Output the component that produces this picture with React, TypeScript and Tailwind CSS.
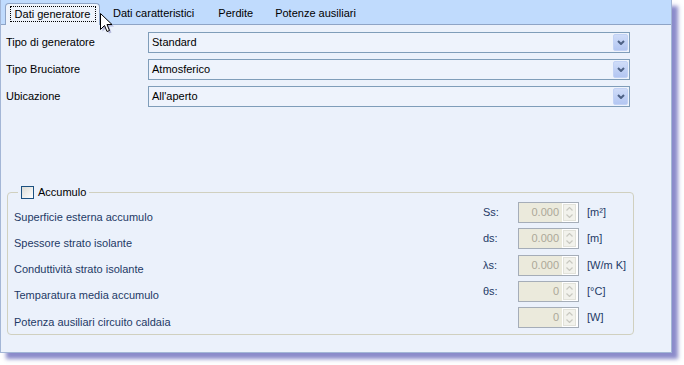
import React from "react";

const font = { fontFamily: '"Liberation Sans", Arial, sans-serif' };

function Combo({ value }: { value: string }) {
  return (
    <div className="h-[21px] w-[482px] border border-[#7f9db9] bg-[#eef3fc] flex items-center justify-between pl-[3px] pr-[1px]">
      <span className="text-black">{value}</span>
      <div className="h-[17px] w-[15px] rounded-[2px] bg-gradient-to-b from-[#cfdcf8] to-[#b3c6f2] border border-[#c2d2f5] flex items-center justify-center">
        <svg width="8" height="5" viewBox="0 0 8 5">
          <path d="M1 1 L4 4 L7 1" fill="none" stroke="#4d6185" strokeWidth="2" />
        </svg>
      </div>
    </div>
  );
}

function Spin({ value }: { value: string }) {
  return (
    <div className="h-[21px] w-[61px] border border-[#a5adb8] bg-[#ebeadc] flex items-center">
      <span className="flex-1 text-right pr-[3px] text-[#aca899]">{value}</span>
      <div className="h-[19px] w-[16px] bg-white pl-[1px] pr-[2px] py-[1px] flex">
        <div className="flex-1 bg-[#f2f2ec] border border-[#e2e2da] flex flex-col items-center justify-center gap-[3px]">
          <svg width="7" height="4" viewBox="0 0 7 4">
            <path d="M0.5 3.5 L3.5 0.5 L6.5 3.5" fill="none" stroke="#c8c8c0" strokeWidth="1.2" />
          </svg>
          <svg width="7" height="4" viewBox="0 0 7 4">
            <path d="M0.5 0.5 L3.5 3.5 L6.5 0.5" fill="none" stroke="#c8c8c0" strokeWidth="1.2" />
          </svg>
        </div>
      </div>
    </div>
  );
}

const rows = [
  { label: "Superficie esterna accumulo", sym: "Ss:", value: "0.000", unit: "[m²]" },
  { label: "Spessore strato isolante", sym: "ds:", value: "0.000", unit: "[m]" },
  { label: "Conduttività strato isolante", sym: "λs:", value: "0.000", unit: "[W/m K]" },
  { label: "Temparatura media accumulo", sym: "θs:", value: "0", unit: "[°C]" },
  { label: "Potenza ausiliari circuito caldaia", sym: "", value: "0", unit: "[W]" },
];

export default function App() {
  return (
    <div className="w-[684px] h-[365px] bg-white relative text-[11px] leading-none" style={font}>
      <div className="w-[672px] h-[353px] bg-[#ebf1fb] border border-t-0 border-[#a3b6d6] shadow-[6px_6px_4px_rgba(90,90,180,0.7)] flex flex-col">
        {/* tab strip */}
        <div className="h-[25px] shrink-0 bg-[#c0dbfd] border-b border-[#8ea4c6] flex items-end pl-[4px]">
          <div className="h-[22px] -mb-[1px] w-[95px] rounded-t-[4px] border border-b-0 border-[#8ea4c6] bg-[#eef3fb] flex items-start justify-center pt-[2px]">
            <div className="border border-dotted border-black px-[1px] h-[16px] w-[86px] flex items-center justify-center text-black">
              Dati generatore
            </div>
          </div>
          <div className="h-[24px] flex items-center text-black pt-[3px]">
            <span className="ml-[13px]">Dati caratteristici</span>
            <span className="ml-[24px]">Perdite</span>
            <span className="ml-[22px]">Potenze ausiliari</span>
          </div>
        </div>

        {/* combos */}
        <div className="grid grid-cols-[142px_482px] gap-y-[6px] pt-[7px] pl-[5px] items-center">
          <span className="text-black">Tipo di generatore</span>
          <Combo value="Standard" />
          <span className="text-black">Tipo Bruciatore</span>
          <Combo value="Atmosferico" />
          <span className="text-black">Ubicazione</span>
          <Combo value="All'aperto" />
        </div>

        {/* group */}
        <fieldset className="mt-[79px] ml-[6px] w-[627px] border border-[#d0d0bf] rounded-[4px] pb-[6px]">
          <legend className="ml-[10px] px-[3px] flex items-center gap-[4px] h-[13px]">
            <span className="w-[13px] h-[13px] border border-[#1c5180] bg-gradient-to-br from-[#dcdcd6] to-white" />
            <span className="text-black">Accumulo</span>
          </legend>
          <div className="grid grid-cols-[469px_35px_61px_auto] gap-y-[5.3px] pt-[3px] pl-[6px] text-[#1e3a66]">
            {rows.map((r) => (
              <React.Fragment key={r.label}>
                <span className="pt-[9px] self-center">{r.label}</span>
                <span className="self-center">{r.sym}</span>
                <Spin value={r.value} />
                <span className="self-center pl-[8px]">{r.unit}</span>
              </React.Fragment>
            ))}
          </div>
        </fieldset>
      </div>

      {/* mouse cursor */}
      <svg className="absolute left-[100px] top-[13px]" width="16" height="22" viewBox="0 0 16 22">
        <path d="M2.5 2.5 L2.5 18.5 L6.5 14.5 L9 20.5 L11.5 19.5 L9 13.5 L14 13.5 Z" fill="rgba(80,80,160,0.35)" />
        <path d="M0.5 0.5 L0.5 16.5 L4.5 12.5 L7 18.5 L9.5 17.5 L7 11.5 L12 11.5 Z" fill="white" stroke="black" strokeWidth="1" />
      </svg>
    </div>
  );
}
